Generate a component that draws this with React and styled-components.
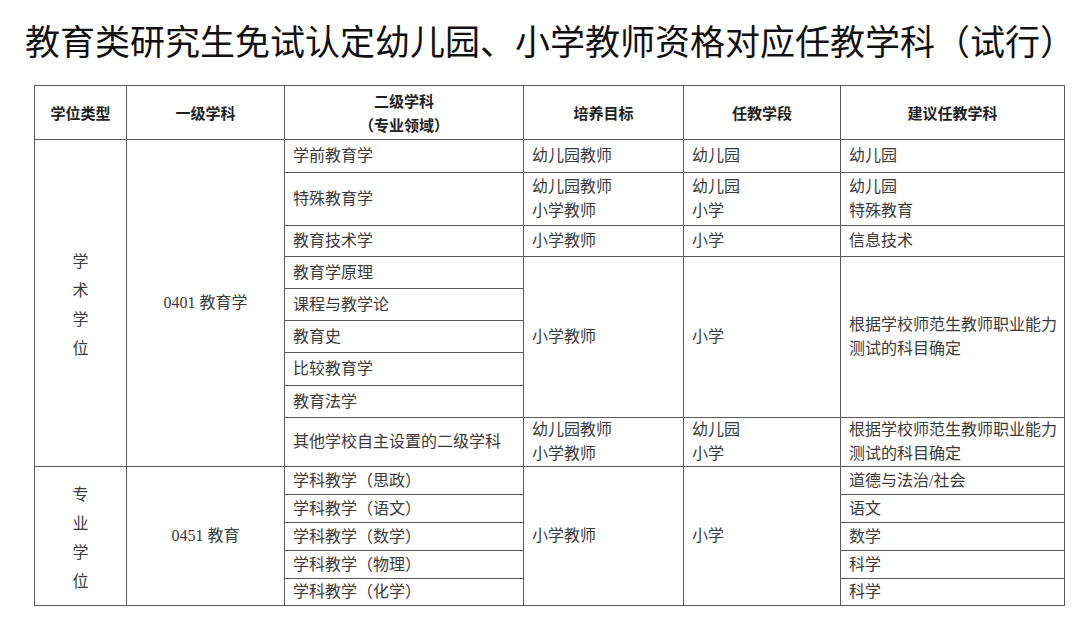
import React from "react";
import styled, { createGlobalStyle } from "styled-components";

const GlobalStyle = createGlobalStyle`
  html, body {
    margin: 0;
    padding: 0;
    background: #ffffff;
  }
`;

const academicRows = [
  { name: "学前教育学", height: 33, goal: ["幼儿园教师"], stage: ["幼儿园"], subject: ["幼儿园"] },
  { name: "特殊教育学", height: 53, goal: ["幼儿园教师", "小学教师"], stage: ["幼儿园", "小学"], subject: ["幼儿园", "特殊教育"] },
  { name: "教育技术学", height: 31, goal: ["小学教师"], stage: ["小学"], subject: ["信息技术"] },
  { name: "教育学原理", height: 32 },
  { name: "课程与教学论", height: 32 },
  { name: "教育史", height: 32 },
  { name: "比较教育学", height: 33 },
  { name: "教育法学", height: 32 },
  { name: "其他学校自主设置的二级学科", height: 48, goal: ["幼儿园教师", "小学教师"], stage: ["幼儿园", "小学"], subject: ["根据学校师范生教师职业能力", "测试的科目确定"] },
];

const professionalRows = [
  { name: "学科教学（思政）", subject: "道德与法治/社会", height: 28 },
  { name: "学科教学（语文）", subject: "语文", height: 28 },
  { name: "学科教学（数学）", subject: "数学", height: 28 },
  { name: "学科教学（物理）", subject: "科学", height: 28 },
  { name: "学科教学（化学）", subject: "科学", height: 27 },
];

function Lines({ items }) {
  return items.map((t, i) => (
    <React.Fragment key={i}>
      {i > 0 && <br />}
      {t}
    </React.Fragment>
  ));
}

export default function App() {
  return (
    <Page>
      <GlobalStyle />
      <Title>教育类研究生免试认定幼儿园、小学教师资格对应任教学科（试行）</Title>
      <Table>
        <colgroup>
          <col style={{ width: 92 }} />
          <col style={{ width: 158 }} />
          <col style={{ width: 239 }} />
          <col style={{ width: 160 }} />
          <col style={{ width: 157 }} />
          <col style={{ width: 224 }} />
        </colgroup>
        <thead>
          <Row $h={54}>
            <Head>学位类型</Head>
            <Head>一级学科</Head>
            <Head>
              二级学科
              <br />
              （专业领域）
            </Head>
            <Head>培养目标</Head>
            <Head>任教学段</Head>
            <Head>建议任教学科</Head>
          </Row>
        </thead>
        <tbody>
          {academicRows.map((r, i) => (
            <Row key={r.name} $h={r.height}>
              {i === 0 && (
                <Cell rowSpan={academicRows.length} $center>
                  <Vertical>
                    <span>学</span>
                    <span>术</span>
                    <span>学</span>
                    <span>位</span>
                  </Vertical>
                </Cell>
              )}
              {i === 0 && (
                <Cell rowSpan={academicRows.length} $center>
                  <Code>0401</Code> 教育学
                </Cell>
              )}
              <Cell>{r.name}</Cell>
              {r.goal ? (
                <>
                  <Cell>
                    <Lines items={r.goal} />
                  </Cell>
                  <Cell>
                    <Lines items={r.stage} />
                  </Cell>
                  <Cell>
                    <Lines items={r.subject} />
                  </Cell>
                </>
              ) : (
                i === 3 && (
                  <>
                    <Cell rowSpan={5}>小学教师</Cell>
                    <Cell rowSpan={5}>小学</Cell>
                    <Cell rowSpan={5}>
                      根据学校师范生教师职业能力
                      <br />
                      测试的科目确定
                    </Cell>
                  </>
                )
              )}
            </Row>
          ))}
          {professionalRows.map((r, i) => (
            <Row key={r.name} $h={r.height}>
              {i === 0 && (
                <>
                  <Cell rowSpan={professionalRows.length} $center>
                    <Vertical>
                      <span>专</span>
                      <span>业</span>
                      <span>学</span>
                      <span>位</span>
                    </Vertical>
                  </Cell>
                  <Cell rowSpan={professionalRows.length} $center>
                    <Code>0451</Code> 教育
                  </Cell>
                </>
              )}
              <Cell>{r.name}</Cell>
              {i === 0 && (
                <>
                  <Cell rowSpan={professionalRows.length}>小学教师</Cell>
                  <Cell rowSpan={professionalRows.length}>小学</Cell>
                </>
              )}
              <Cell>{r.subject}</Cell>
            </Row>
          ))}
        </tbody>
      </Table>
    </Page>
  );
}

const Page = styled.div`
  width: 1080px;
  height: 620px;
  padding: 19px 0 0 0;
  box-sizing: border-box;
  background: #ffffff;
  overflow: hidden;
`;

const Title = styled.h1`
  margin: 0 0 24px 25px;
  font-family: "Noto Sans CJK SC", "Noto Sans", sans-serif;
  font-size: 35px;
  font-weight: 400;
  line-height: 42px;
  color: #111111;
  white-space: nowrap;
`;

const Table = styled.table`
  margin-left: 34px;
  width: 1030px;
  table-layout: fixed;
  border-collapse: collapse;
  font-family: "Liberation Serif", "Noto Sans CJK SC", serif;
  font-size: 16px;
  color: #3a3a3a;
`;

const Row = styled.tr`
  height: ${(p) => p.$h}px;
`;

const Head = styled.th`
  border: 1px solid #5a5a5a;
  padding: 0;
  font-family: "Noto Sans CJK SC", sans-serif;
  font-size: 15px;
  font-weight: 700;
  line-height: 24px;
  color: #222222;
  text-align: center;
  vertical-align: middle;
`;

const Cell = styled.td`
  border: 1px solid #5a5a5a;
  padding: 0 0 0 ${(p) => (p.$center ? 0 : 8)}px;
  text-align: ${(p) => (p.$center ? "center" : "left")};
  vertical-align: middle;
  line-height: 24px;
  white-space: nowrap;
`;

const Code = styled.span`
  font-family: "Liberation Serif", serif;
`;

const Vertical = styled.div`
  display: flex;
  flex-direction: column;
  align-items: center;
  line-height: 29px;
  padding-top: 4px;
`;
